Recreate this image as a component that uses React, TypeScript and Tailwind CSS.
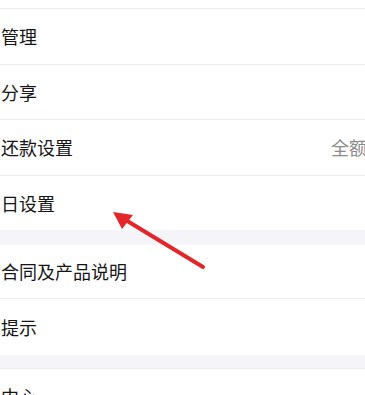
const Line = () => <div className="h-px bg-[#ececec]" />;

const Band = ({ h }: { h: string }) => (
    <div className={`${h} bg-[#f5f4f8]`} />
);

function Row({
    label,
    value,
    height,
}: {
    label: string;
    value?: string;
    height: string;
}) {
    return (
        <div className={`${height} flex items-center justify-between pl-[1px] bg-white`}>
            <span className="text-[18px] text-[#151515]">{label}</span>
            {value && (
                <span className="text-[18px] text-[#8c8c8c] -mr-[2px]">{value}</span>
            )}
        </div>
    );
}

export default function App() {
    return (
        <div
            className="relative w-[365px] h-[395px] overflow-hidden bg-white"
            style={{ fontFamily: '"Noto Sans CJK SC", "Noto Sans", sans-serif' }}
        >
            <div className="h-[8px]" />
            <Line />
            <Row label="管理" height="h-[55px]" />
            <Line />
            <Row label="分享" height="h-[54px]" />
            <Line />
            <Row label="还款设置" value="全额" height="h-[55px]" />
            <Line />
            <Row label="日设置" height="h-[54px]" />
            <Band h="h-[15px]" />
            <Row label="合同及产品说明" height="h-[53px]" />
            <Line />
            <Row label="提示" height="h-[56px]" />
            <Band h="h-[13px]" />
            <div className="h-px bg-[#ececec]" />
            <Row label="中心" height="h-[55px]" />

            {/* red arrow */}
            <svg
                className="absolute left-0 top-0"
                width="365"
                height="395"
                viewBox="0 0 365 395"
            >
                <line
                    x1="203"
                    y1="267"
                    x2="124"
                    y2="219"
                    stroke="#e3262a"
                    strokeWidth="4"
                    strokeLinecap="round"
                />
                <polygon points="113,212 133,215 122,229" fill="#e3262a" />
            </svg>
        </div>
    );
}
